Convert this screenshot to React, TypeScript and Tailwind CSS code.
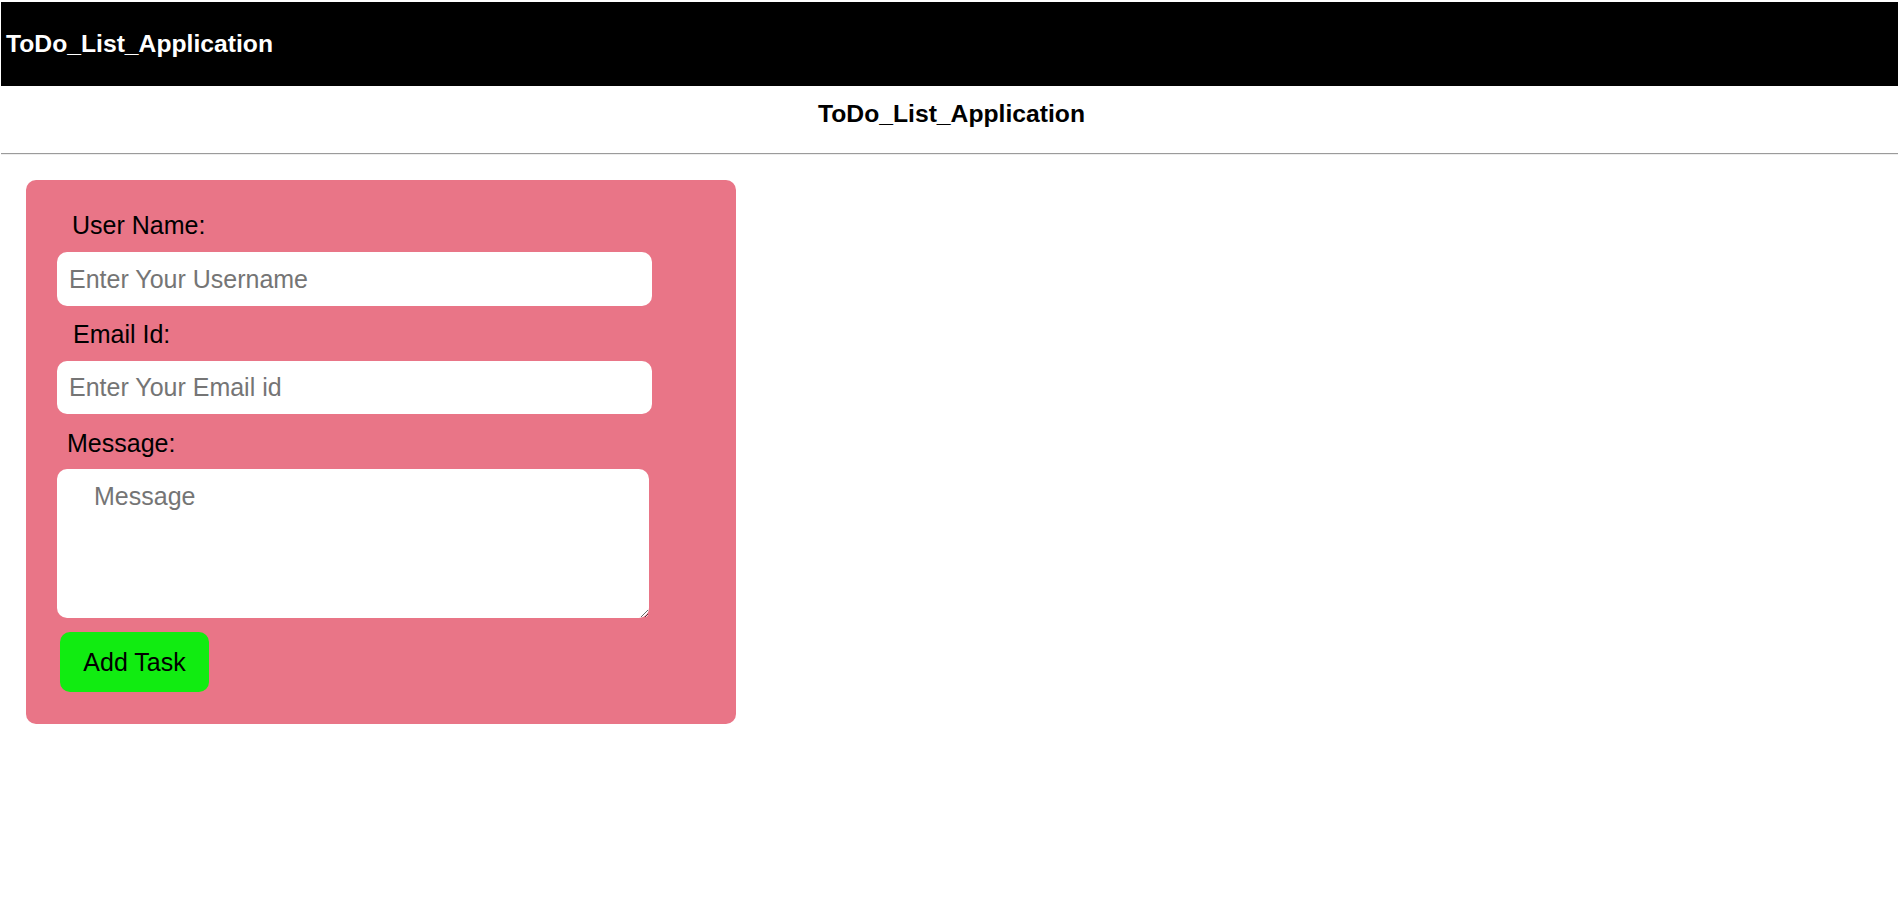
import React from "react";

export default function App() {
  const font = { fontFamily: '"Liberation Sans", Arial, sans-serif' };
  return (
    <div className="min-h-[899px] w-full bg-white pt-[2px] text-black" style={font}>
      <header className="ml-[1px] flex h-[84px] items-center bg-black pl-[5px]">
        <h1 className="text-[24.7px] font-bold leading-[28px] text-white">ToDo_List_Application</h1>
      </header>
      <div className="flex justify-center pt-[14px] pb-[25px] pl-[5px]">
        <h2 className="text-[24.7px] font-bold leading-[28px]">ToDo_List_Application</h2>
      </div>
      <div className="ml-[1px] h-[1px] bg-[#9b9b9b]" />
      <div className="ml-[1px] h-[1px] bg-[#eeeeee]" />

      <form
        className="ml-[26px] mt-[25px] flex w-[710px] flex-col rounded-[10px] bg-[#e97587] pt-[31px] pb-[32px]"
        onSubmit={(e) => e.preventDefault()}
      >
        <label className="pl-[46px] text-[25px] leading-[28px]">User Name:</label>
        <input
          type="text"
          placeholder="Enter Your Username"
          className="ml-[31px] mt-[13px] h-[54px] w-[595px] rounded-[10px] bg-white pl-[12px] text-[25px] outline-none placeholder:text-[#757575]"
          style={font}
        />
        <label className="mt-[14px] pl-[47px] text-[25px] leading-[28px]">Email Id:</label>
        <input
          type="text"
          placeholder="Enter Your Email id"
          className="ml-[31px] mt-[13px] h-[53px] w-[595px] rounded-[10px] bg-white pl-[12px] text-[25px] outline-none placeholder:text-[#757575]"
          style={font}
        />
        <label className="mt-[15px] pl-[41px] text-[25px] leading-[28px]">Message:</label>
        <textarea
          placeholder="Message"
          className="ml-[31px] mt-[12px] h-[149px] w-[592px] resize rounded-[10px] bg-white pl-[37px] pt-[13px] text-[25px] leading-[28px] outline-none placeholder:text-[#757575]"
          style={font}
        />
        <div className="mt-[14px] pl-[34px]">
          <button
            type="submit"
            className="flex h-[60px] w-[149px] items-center justify-center rounded-[10px] bg-[#11ec11] text-[25px] leading-[28px] text-black"
            style={font}
          >
            Add Task
          </button>
        </div>
      </form>
    </div>
  );
}
